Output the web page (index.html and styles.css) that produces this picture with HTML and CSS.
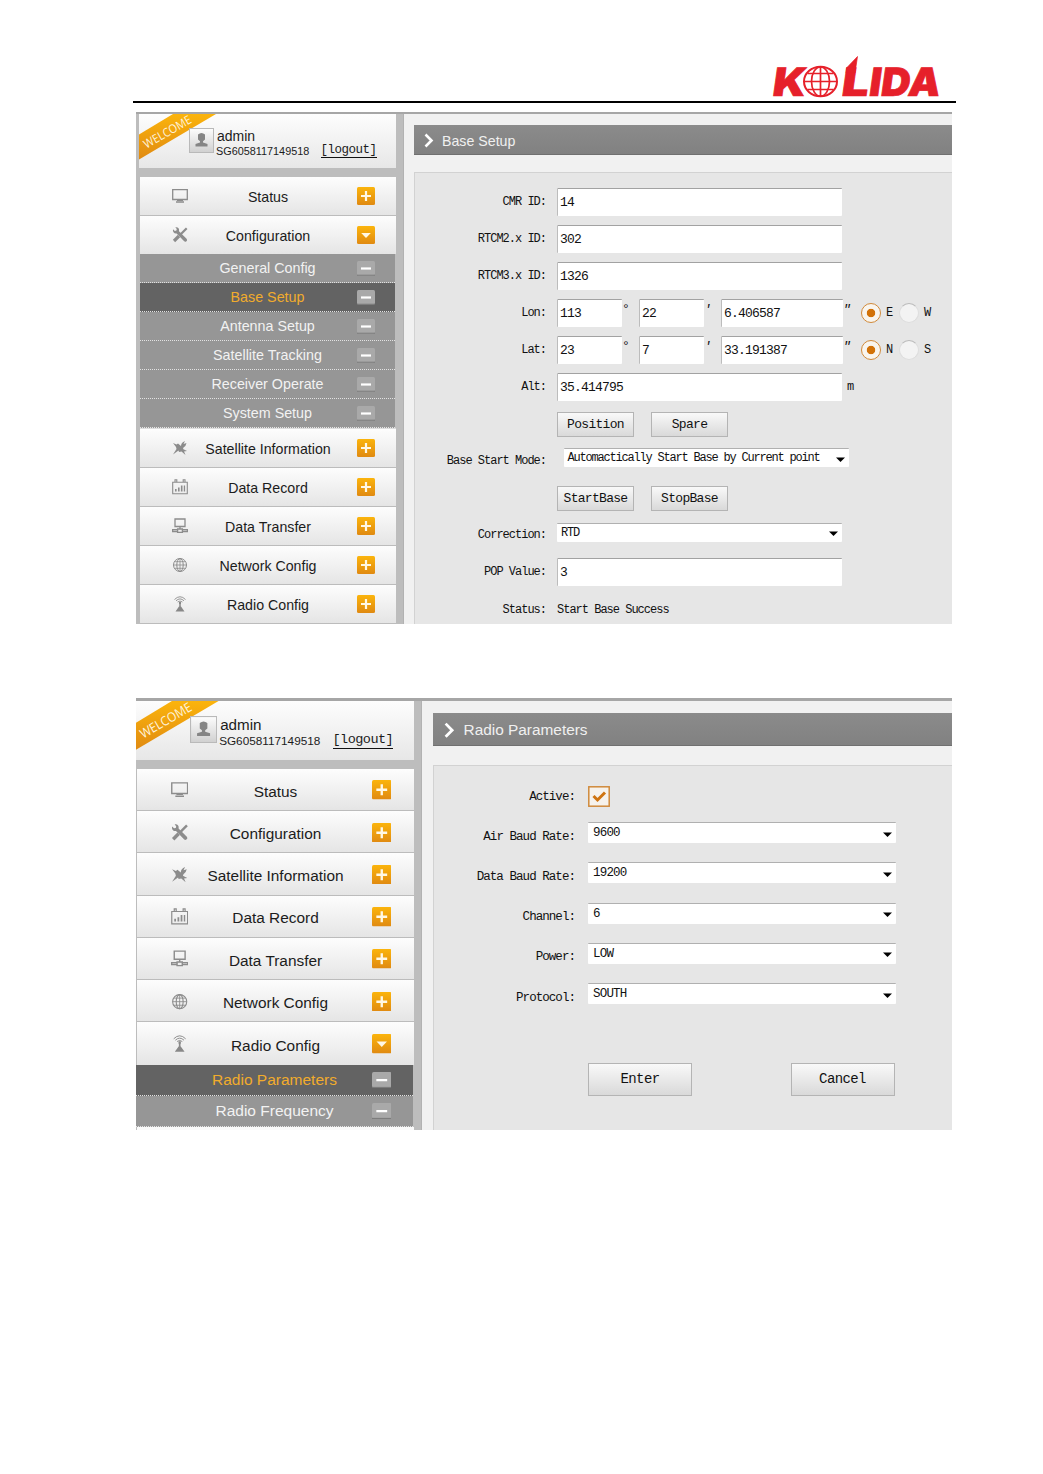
FILE: index.html
```
<!DOCTYPE html>
<html lang="en">
<head>
<meta charset="utf-8">
<title>Kolida web console</title>
<link rel="stylesheet" href="styles.css">
</head>
<body>
<svg class="defs" width="0" height="0">
  <defs>
    <linearGradient id="gold" x1="0" y1="0" x2="0" y2="1"><stop offset="0" stop-color="#fbb40c"/><stop offset="1" stop-color="#e08a12"/></linearGradient>
    <linearGradient id="face" x1="0" y1="0" x2="0" y2="1"><stop offset="0" stop-color="#fdfdfd"/><stop offset="1" stop-color="#d0d0d0"/></linearGradient>
    <symbol id="i-status" viewBox="0 0 16 16"><path d="M.7 1.700h14.600v9.800H.7z" fill="none" stroke="#8c8c8c" stroke-width="1.300"/><path d="M5 12h6v1H5zM4 13.300h8v1.400H4z" fill="#8c8c8c"/></symbol>
    <symbol id="i-config" viewBox="0 0 16 16"><path d="M1 2.200L2.800 4 4.400 3.600 4.800 2 3.400.4C6 0 7.600 1.800 7 4.200L14.800 12q.8 1.600-.6 2.400-1.200.6-2-.2L4.600 6.400C2.400 6.900.4 5 1 2.200z" fill="#8c8c8c"/><path d="M14.700 1.300L9 7" stroke="#8c8c8c" stroke-width="2.200"/><path d="M7 9l-5 5" stroke="#8c8c8c" stroke-width="3.200"/></symbol>
    <symbol id="i-sat" viewBox="0 0 16 16"><path d="M1 3l3.500 1.500L6 3.500l3 2.500Q9 2.500 13 1l-1.500 3 3-1q-.5 3-3 4.500l-.5 1.500 4 2-3 .5L13.500 15l-4-3.500L7 12l-.5-1.500L1 14.500 4.500 9 4 7z" fill="#8c8c8c"/></symbol>
    <symbol id="i-record" viewBox="0 0 16 16"><path d="M.7 3.200h14.600v11.500H.7zM3 3V.8h1.800V3M11.200 3V.8H13V3" fill="none" stroke="#8c8c8c" stroke-width="1.100"/><path d="M3 10h1.600v2.500H3zM6 8.500h1.600v4H6zM8.900 6.500h1.600v6H8.900zM11.800 6.500h1.300v6h-1.300z" fill="#8c8c8c"/></symbol>
    <symbol id="i-transfer" viewBox="0 0 16 16"><path d="M3 1h10v7.500H3zM8 8.500V11M.6 11.700h5v1.800h-5zM10.400 11.700h5v1.800h-5zM5.600 11h4.800v3.400H5.600z" fill="none" stroke="#8c8c8c" stroke-width="1.300"/></symbol>
    <symbol id="i-network" viewBox="0 0 16 16"><g fill="none" stroke="#8c8c8c"><circle cx="8" cy="8" r="6.500"/><ellipse cx="8" cy="8" rx="3.200" ry="6.500"/><path d="M8 1.500v13M1.600 8h12.800M2.600 4.700h10.800M2.600 11.300h10.800" stroke-width=".8"/></g></symbol>
    <symbol id="i-radio" viewBox="0 0 16 16"><g fill="none" stroke="#8c8c8c" stroke-width=".9"><path d="M2.500 3.500Q8-2 13.500 3.500M4 4.800q4-3.800 8 0M5.600 6q2.400-2 4.800 0"/></g><path d="M8 6v6" stroke="#888" stroke-width="1.500"/><path d="M7 6h2v2H7zM7 10.500h2l3.500 5h-9z" fill="#888"/></symbol>
    <symbol id="b-plus" viewBox="0 0 18 18"><rect width="18" height="18" rx="1.500" fill="url(#gold)"/><path d="M9 4v10M4 9h10" stroke="#fff8e6" stroke-width="2.200"/></symbol>
    <symbol id="b-down" viewBox="0 0 18 18"><rect width="18" height="18" rx="1.500" fill="url(#gold)"/><path d="M4.200 7h9.600L9 12z" fill="#fff8e6"/></symbol>
    <symbol id="b-minus" viewBox="0 0 18 15"><rect width="18" height="14.500" rx="1.500" fill="#a9a9a9"/><path d="M0 14.200h18" stroke="#777" stroke-width=".9"/><path d="M4 7.500h10" stroke="#fff" stroke-width="2.200"/></symbol>
    <symbol id="ribbon" viewBox="0 0 80 48"><path d="M0 20.500L34 0H77L0 45.500z" fill="url(#gold)"/><text x="0" y="0" transform="translate(7.500 34.800) rotate(-30)" font-family="Open Sans, sans-serif" font-size="12" fill="#fff3dc" textLength="53" lengthAdjust="spacingAndGlyphs">WELCOME</text></symbol>
    <symbol id="avatar" viewBox="0 0 25 25"><rect x=".5" y=".5" width="24" height="24" fill="url(#face)" stroke="#b9b9b9"/><path d="M9 6.500Q12.500 3.500 16 6.500v5l-2 1.700v1.300l4.500 1.500v2.500h-12V16l4.500-1.500v-1.300L9 11.500z" fill="#858585"/></symbol>
  </defs>
</svg>

<header class="head">
  <svg class="logo" viewBox="0 0 172 60" width="172" height="60" aria-label="Kolida">
    <g fill="#e6202a" stroke="#e6202a" stroke-width=".7" font-family="Inter, sans-serif" font-weight="900" font-size="39">
      <text transform="translate(1.500 41) skewX(-8)" textLength="33" lengthAdjust="spacingAndGlyphs">K</text>
      <text transform="translate(70.500 41) skewX(-8)" textLength="27" lengthAdjust="spacingAndGlyphs">L</text>
      <text transform="translate(98 41) skewX(-8)" textLength="71" lengthAdjust="spacingAndGlyphs">IDA</text>
      <path d="M76.500 13L87.500 1.500 85 18h-9z"/>
    </g>
    <g fill="none" stroke="#e6202a" stroke-width="1.700"><ellipse cx="50.500" cy="26.500" rx="16.500" ry="14.700" stroke-width="2"/><ellipse cx="50.500" cy="26.500" rx="9" ry="14.700"/><path d="M50.500 12v29M34 26.500h33M37.500 18.500h26M37.500 34.500h26"/></g>
  </svg>
</header>

<section class="shot shot-base">
  <aside class="side">
    <div class="user">
      <svg class="ribbon"><use href="#ribbon"/></svg>
      <svg class="avatar"><use href="#avatar"/></svg>
      <div class="who"><div class="name">admin</div><div class="line"><span class="serial">SG6058117149518</span><a class="logout">[logout]</a></div></div>
    </div>
    <nav class="menu">
      <div class="item"><svg class="ico"><use href="#i-status"/></svg><span>Status</span><svg class="btn"><use href="#b-plus"/></svg></div>
      <div class="item open"><svg class="ico"><use href="#i-config"/></svg><span>Configuration</span><svg class="btn"><use href="#b-down"/></svg></div>
      <div class="sub"><span>General Config</span><svg class="min"><use href="#b-minus"/></svg></div>
      <div class="sub on"><span>Base Setup</span><svg class="min"><use href="#b-minus"/></svg></div>
      <div class="sub"><span>Antenna Setup</span><svg class="min"><use href="#b-minus"/></svg></div>
      <div class="sub"><span>Satellite Tracking</span><svg class="min"><use href="#b-minus"/></svg></div>
      <div class="sub"><span>Receiver Operate</span><svg class="min"><use href="#b-minus"/></svg></div>
      <div class="sub"><span>System Setup</span><svg class="min"><use href="#b-minus"/></svg></div>
      <div class="item"><svg class="ico"><use href="#i-sat"/></svg><span>Satellite Information</span><svg class="btn"><use href="#b-plus"/></svg></div>
      <div class="item"><svg class="ico"><use href="#i-record"/></svg><span>Data Record</span><svg class="btn"><use href="#b-plus"/></svg></div>
      <div class="item"><svg class="ico"><use href="#i-transfer"/></svg><span>Data Transfer</span><svg class="btn"><use href="#b-plus"/></svg></div>
      <div class="item"><svg class="ico"><use href="#i-network"/></svg><span>Network Config</span><svg class="btn"><use href="#b-plus"/></svg></div>
      <div class="item"><svg class="ico"><use href="#i-radio"/></svg><span>Radio Config</span><svg class="btn"><use href="#b-plus"/></svg></div>
    </nav>
  </aside>
  <main class="main">
    <h2 class="title"><svg class="chev" viewBox="0 0 10 15"><path d="M1.500 1.500l6 6-6 6" fill="none" stroke="#fff" stroke-width="2.600"/></svg>Base Setup</h2>
    <div class="panel">
      <div class="row"><label>CMR ID:</label><div class="input">14</div></div>
      <div class="row"><label>RTCM2.x ID:</label><div class="input">302</div></div>
      <div class="row"><label>RTCM3.x ID:</label><div class="input">1326</div></div>
      <div class="row"><label>Lon:</label><div class="input deg">113</div><i class="unit">°</i><div class="input deg">22</div><i class="unit">′</i><div class="input sec">6.406587</div><i class="unit wide">″</i><b class="radio on"></b><em>E</em><b class="radio"></b><em>W</em></div>
      <div class="row"><label>Lat:</label><div class="input deg">23</div><i class="unit">°</i><div class="input deg">7</div><i class="unit">′</i><div class="input sec">33.191387</div><i class="unit wide">″</i><b class="radio on"></b><em>N</em><b class="radio"></b><em>S</em></div>
      <div class="row"><label>Alt:</label><div class="input">35.414795</div><span class="metre">m</span></div>
      <div class="row"><label></label><div class="push">Position</div><div class="push">Spare</div></div>
      <div class="row"><label>Base Start Mode:</label><div class="select inset">Automactically Start Base by Current point<svg class="arrow" viewBox="0 0 9 5"><path d="M0 .5h9L4.500 5z"/></svg></div></div>
      <div class="row"><label></label><div class="push">StartBase</div><div class="push">StopBase</div></div>
      <div class="row"><label>Correction:</label><div class="select">RTD<svg class="arrow" viewBox="0 0 9 5"><path d="M0 .5h9L4.500 5z"/></svg></div></div>
      <div class="row"><label>POP Value:</label><div class="input">3</div></div>
      <div class="row"><label>Status:</label><span class="note">Start Base Success</span></div>
    </div>
  </main>
</section>

<section class="shot shot-radio">
  <aside class="side">
    <div class="user">
      <svg class="ribbon"><use href="#ribbon"/></svg>
      <svg class="avatar"><use href="#avatar"/></svg>
      <div class="who"><div class="name">admin</div><div class="line"><span class="serial">SG6058117149518</span><a class="logout">[logout]</a></div></div>
    </div>
    <nav class="menu">
      <div class="item"><svg class="ico"><use href="#i-status"/></svg><span>Status</span><svg class="btn"><use href="#b-plus"/></svg></div>
      <div class="item"><svg class="ico"><use href="#i-config"/></svg><span>Configuration</span><svg class="btn"><use href="#b-plus"/></svg></div>
      <div class="item"><svg class="ico"><use href="#i-sat"/></svg><span>Satellite Information</span><svg class="btn"><use href="#b-plus"/></svg></div>
      <div class="item"><svg class="ico"><use href="#i-record"/></svg><span>Data Record</span><svg class="btn"><use href="#b-plus"/></svg></div>
      <div class="item"><svg class="ico"><use href="#i-transfer"/></svg><span>Data Transfer</span><svg class="btn"><use href="#b-plus"/></svg></div>
      <div class="item"><svg class="ico"><use href="#i-network"/></svg><span>Network Config</span><svg class="btn"><use href="#b-plus"/></svg></div>
      <div class="item open"><svg class="ico"><use href="#i-radio"/></svg><span>Radio Config</span><svg class="btn"><use href="#b-down"/></svg></div>
      <div class="sub on"><span>Radio Parameters</span><svg class="min"><use href="#b-minus"/></svg></div>
      <div class="sub"><span>Radio Frequency</span><svg class="min"><use href="#b-minus"/></svg></div>
      <div class="tail"></div>
    </nav>
  </aside>
  <main class="main">
    <h2 class="title"><svg class="chev" viewBox="0 0 10 15"><path d="M1.500 1.500l6 6-6 6" fill="none" stroke="#fff" stroke-width="2.600"/></svg>Radio Parameters</h2>
    <div class="panel">
      <div class="row"><label>Active:</label><svg class="check" viewBox="0 0 22 21"><rect x=".8" y=".8" width="20.400" height="19.400" fill="#f6f2ec" stroke="#d08a3c" stroke-width="1.500"/><path d="M5.500 10l4 4L17 6.500" fill="none" stroke="#cf7410" stroke-width="3"/></svg></div>
      <div class="row"><label>Air Baud Rate:</label><div class="select">9600<svg class="arrow" viewBox="0 0 9 5"><path d="M0 .5h9L4.500 5z"/></svg></div></div>
      <div class="row"><label>Data Baud Rate:</label><div class="select">19200<svg class="arrow" viewBox="0 0 9 5"><path d="M0 .5h9L4.500 5z"/></svg></div></div>
      <div class="row"><label>Channel:</label><div class="select">6<svg class="arrow" viewBox="0 0 9 5"><path d="M0 .5h9L4.500 5z"/></svg></div></div>
      <div class="row"><label>Power:</label><div class="select">LOW<svg class="arrow" viewBox="0 0 9 5"><path d="M0 .5h9L4.500 5z"/></svg></div></div>
      <div class="row"><label>Protocol:</label><div class="select">SOUTH<svg class="arrow" viewBox="0 0 9 5"><path d="M0 .5h9L4.500 5z"/></svg></div></div>
      <div class="row actions"><label></label><div class="push">Enter</div><div class="push">Cancel</div></div>
    </div>
  </main>
</section>
</body>
</html>
```
FILE: styles.css
```
* { box-sizing: border-box; }
html, body { margin: 0; background: #fff; }
body { width: 1043px; height: 1474px; overflow: hidden; font-family: "Liberation Sans", sans-serif; color: #1c1c1c; }
svg { display: block; flex: none; }
.defs { position: absolute; }

.head { margin: 0 87px 0 133px; height: 103px; border-bottom: 2px solid #000; padding: 55px 0 0 637px; }

.shot { --s: 1; display: flex; width: 816px; margin-left: 136px; overflow: hidden; border-top: 2px solid #a6a6a6; background: #f1f1f1; }
.shot-base { height: 512px; margin-top: 9px; }
.shot-radio { --s: 1.085; height: 432px; margin-top: 74px; border-top-width: 3px; }

.side { flex: none; width: 268px; background: #bdbdbd; padding-left: 3px; border-right: 1px solid #b2b2b2; }
.shot-radio .side { width: 286px; padding-left: 0; }
.user { position: relative; display: flex; width: 257px; height: 54px; background: linear-gradient(#fdfdfd, #e7e7e7); padding: 14px 0 0 50px; }
.shot-radio .user { width: 278px; height: 59px; padding: 15px 0 0 54px; }
.ribbon { position: absolute; left: 0; top: 0; width: calc(80px * var(--s)); height: calc(48px * var(--s)); }
.shot-radio .ribbon { left: -1px; }
.avatar { position: relative; width: calc(25px * var(--s)); height: calc(25px * var(--s)); }
.who { padding-left: 3px; }
.name { font-size: calc(14px * var(--s)); line-height: calc(16px * var(--s)); }
.line { display: flex; align-items: center; height: calc(14px * var(--s)); white-space: nowrap; }
.serial { font-size: calc(10.850px * var(--s)); width: calc(104.500px * var(--s)); margin-left: -1px; }
.logout { font-family: "Liberation Mono", monospace; font-size: calc(12.500px * var(--s)); letter-spacing: calc(-.5px * var(--s)); line-height: calc(13px * var(--s)); border-bottom: 1px solid #111; }

.menu { width: 256px; margin: 9px 0 0 1px; }
.shot-radio .menu { width: 277px; }
.item { display: grid; grid-template-columns: calc(60px * var(--s)) 1fr calc(60px * var(--s)); align-items: center; height: 39px; background: linear-gradient(#fdfdfd, #e5e5e5); border-bottom: 1px solid #bcbcbc; font-size: calc(14.200px * var(--s)); white-space: nowrap; text-align: center; }
.item.open { height: 38px; border-bottom: 0; }
.shot-base .sub + .item { height: 40px; border-top: 1px solid #ddd; }
.shot-radio .item { height: 42.240px; }
.item span { padding-top: 1px; }
.shot-radio .item span { padding-top: 4px; }
.ico { width: calc(16px * var(--s)); height: calc(16px * var(--s)); margin-left: calc(32px * var(--s)); }
.btn { width: calc(18px * var(--s)); height: calc(18px * var(--s)); margin-left: calc(21px * var(--s)); }
.shot-radio .ico, .shot-radio .btn { margin-top: 1px; }
.shot-radio .ico { margin-left: 34px; }
.sub { display: grid; grid-template-columns: 1fr calc(38px * var(--s)); align-items: center; height: 29px; margin-right: 1px; padding-left: calc(38px * var(--s)); background: #969696; border-bottom: 1px dotted #e2e2e2; color: #f2f2f2; font-size: calc(14.300px * var(--s)); text-align: center; }
.sub.on { background: #636363; color: #f1ac2c; }
.shot-radio .sub { height: 31.400px; margin-left: -1px; }
.min { width: calc(18px * var(--s)); height: calc(15px * var(--s)); }
.tail { height: 5px; background: #fafafa; }

.main { flex: 1; min-width: 0; padding: 11px 0 0 10px; }
.shot-radio .main { padding: 12px 0 0 11px; }
.title { display: flex; align-items: center; height: 30px; margin: 0; padding-left: 10px; background: linear-gradient(#8b8b8b, #818181); color: #f0f0f0; font-weight: 400; font-size: calc(14.200px * var(--s)); border-bottom: 1px solid #707070; padding-top: 2px; }
.shot-radio .title { height: 33px; padding-left: 11px; }
.chev { width: calc(10px * var(--s)); height: calc(15px * var(--s)); margin-right: calc(8px * var(--s)); }
.panel { height: 600px; margin-top: 17px; padding-top: 10.500px; background: #e6e6e6; border: 1px solid #d2d2d2; border-right: 0; font-family: "Liberation Mono", monospace; }
.shot-radio .panel { margin-top: 19px; }

.row { display: flex; align-items: center; height: 37.050px; font-size: 12px; letter-spacing: -1px; white-space: nowrap; color: #111; }
.row label { flex: none; width: 131px; margin-right: 11px; text-align: right; }
.input { width: 285px; height: 28px; background: #fff; border-top: 1.500px solid #a2a2a2; border-left: 1.500px solid #bcbcbc; border-radius: 1px; padding-left: 2px; font-size: 13px; line-height: 27px; letter-spacing: -.8px; }
.deg { width: 65px; }
.sec { width: 122px; }
.unit { width: 17px; height: 22px; font-style: italic; font-size: 13px; }
.unit.wide { width: 18px; }
.radio { width: 20px; height: 20px; border-radius: 50%; background: #f3f3f3; border: 1px solid #ddd; border-top-color: #bbb; }
.radio.on { background: radial-gradient(circle, #d27208 0 3.800px, #f9f5ee 4.600px); border: 1.500px solid #d18a3a; }
.row em { width: 18px; padding-left: 5px; font-style: normal; }
.metre { margin-left: 5px; }
.push { flex: none; width: 77px; height: 25px; margin-right: 17px; background: linear-gradient(#f9f9f9, #d9d9d9); border: 1px solid #b4b4b4; text-align: center; font-size: 13px; line-height: 23px; letter-spacing: -.7px; }
.select { display: flex; justify-content: space-between; align-items: center; width: 285px; height: 19px; margin-top: -6px; padding: 0 4px 0 4px; background: #fff; border-top: 1px solid #b0b0b0; letter-spacing: -1.200px; border-radius: 1px; }
.select.inset { margin: -7px 0 0 6.500px; }
.arrow { width: 9px; height: 5px; margin-top: 2px; }

.shot-radio .row { height: 40.200px; font-size: 12.500px; letter-spacing: -.95px; }
.shot-radio .row label { width: 141px; margin-right: 13px; }
.shot-radio .select { width: 308px; height: 21px; margin-top: -8px; letter-spacing: -.8px; padding-left: 5px; }
.check { width: 22px; height: 21px; }
.shot-radio .actions { margin-top: 42px; }
.shot-radio .push { width: 104px; height: 33px; margin-right: 98.500px; font-size: 14px; line-height: 31px; letter-spacing: -.6px; }
```
